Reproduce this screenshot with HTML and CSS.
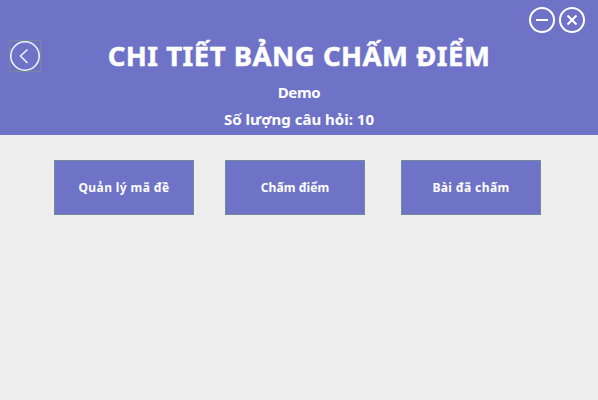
FILE: index.html
```html
<!DOCTYPE html>
<html lang="vi">
<head>
<meta charset="utf-8">
<title>Chi tiết bảng chấm điểm</title>
<link rel="stylesheet" href="styles.css">
</head>
<body>
<header class="header">
  <div class="window-controls">
    <svg class="control" viewBox="0 0 26 26"><circle cx="13" cy="13" r="12"/><path d="M7 13H19"/></svg>
    <svg class="control" viewBox="0 0 26 26"><circle cx="13" cy="13" r="12"/><path d="M8.5 8.5L17.5 17.5M17.5 8.5L8.5 17.5"/></svg>
  </div>
  <div class="title-row">
    <button class="back" aria-label="Quay lại"><svg viewBox="0 0 30 30"><circle cx="15" cy="15" r="14.2"/><path d="M17.5 8.5L10.5 15L17.5 22"/></svg></button>
    <h1 class="title">CHI TIẾT BẢNG CHẤM ĐIỂM</h1>
  </div>
  <p class="name">Demo</p>
  <p class="count">Số lượng câu hỏi: 10</p>
</header>
<main class="actions">
  <button class="action wide">Quản lý mã đề</button>
  <button class="action">Chấm điểm</button>
  <button class="action wide">Bài đã chấm</button>
</main>
</body>
</html>
```

FILE: styles.css
```css
* { box-sizing: border-box; margin: 0; }
body { height: 400px; background: #eee; color: #fff; font-family: "Noto Sans", sans-serif; font-weight: 700; overflow: hidden; }
.header { height: 135px; background: #6e73c8; text-align: center; }
.window-controls { height: 40px; display: flex; justify-content: flex-end; gap: 4px; padding: 7px 13px 0 0; }
.control { width: 26px; height: 26px; fill: none; stroke: #fff; stroke-width: 2; }
.title-row { height: 32px; display: grid; grid-template-columns: 32px 1fr 32px; padding: 0 9px; align-items: center; }
.back { width: 32px; height: 32px; padding: 0; border: 1px solid #738a99; background: none; }
.back svg { display: block; width: 30px; height: 30px; fill: none; stroke: #f0f0fa; stroke-width: 1.6; }
.title { height: 32px; font-size: 27.5px; line-height: 31px; letter-spacing: 0.5px; -webkit-text-stroke: 0.5px #fff; white-space: nowrap; }
.name, .count { font-size: 15px; line-height: 27px; }
.name { margin-top: 7px; letter-spacing: -0.3px; }
.actions { display: grid; grid-template-columns: repeat(3, 140px); column-gap: 31px; padding: 25px 0 0 54px; }
.action { height: 55px; padding: 0; border: 1px solid #738a99; background: #6e73c8; color: #fff; font: 700 12px "Noto Sans", sans-serif; letter-spacing: 0.1px; }
.wide { letter-spacing: 0.4px; }
.action:last-child { margin-left: 5px; margin-right: -5px; }
```
